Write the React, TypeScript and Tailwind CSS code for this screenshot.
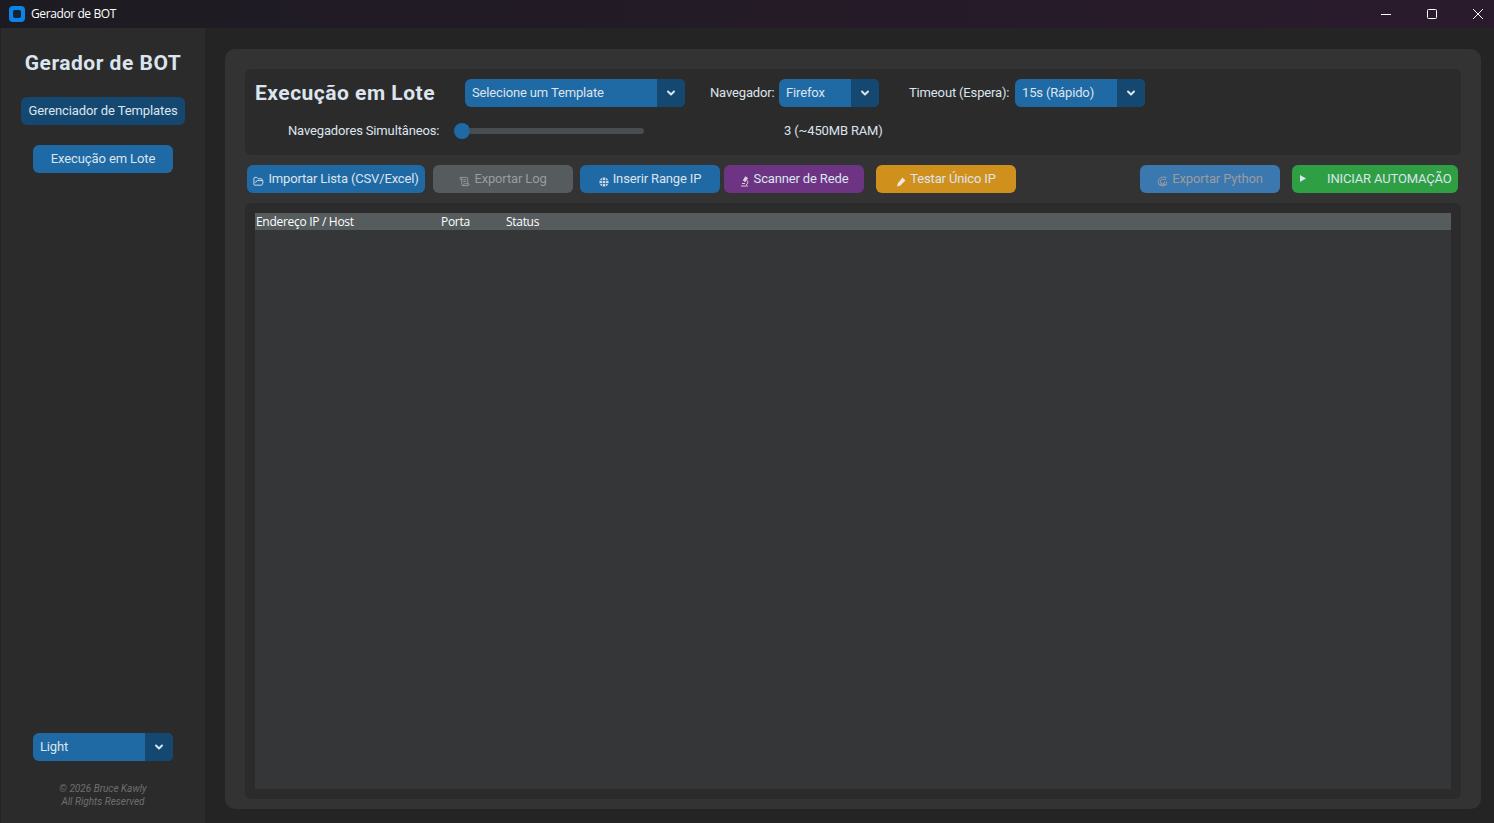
import React from "react";
import { ChevronDown, FolderOpen, ScrollText } from "lucide-react";

const Select: React.FC<{ label: string; width: string }> = ({ label, width }) => (
  <div className={`flex h-7 ${width} shrink-0 overflow-hidden rounded-md bg-[#1f6aa5] text-[13px] tracking-[-0.15px] text-[#dce4ee]`}>
    <span className="flex-1 pl-[7px] leading-[27px]">{label}</span>
    <span className="flex w-7 items-center justify-center bg-[#144870]">
      <ChevronDown size={12} strokeWidth={4} className="text-[#dce4ee]" />
    </span>
  </div>
);

const GlobeIcon = () => (
  <svg width="10" height="10" viewBox="0 0 10 10">
    <circle cx="5" cy="5" r="4.6" fill="#cfd8e2" />
    <path d="M0.5 3.5h9M0.5 6.5h9M3.4 0.6v8.8M6.6 0.6v8.8" stroke="#1f6aa5" strokeWidth="0.8" fill="none" />
  </svg>
);

const MicroscopeIcon = () => (
  <svg width="10" height="11" viewBox="0 0 10 11" fill="none" stroke="#d9cfe2" strokeWidth="1">
    <path d="M5.5 0.8l2 1.2-2.2 3.6-2-1.2z" fill="#d9cfe2" />
    <path d="M7 4.2a2.8 2.8 0 0 1-1 4.6" />
    <path d="M1 10h7M2 7.5h3" />
  </svg>
);

const PencilIcon = () => (
  <svg width="10" height="10" viewBox="0 0 10 10">
    <path d="M6.6 0.6l2.8 2.8-5 5-3.4 1 1-3.4z" fill="#f1e9da" />
  </svg>
);

const SnakeIcon = () => (
  <svg width="11" height="11" viewBox="0 0 11 11" fill="none" stroke="currentColor" strokeWidth="1">
    <path d="M9.8 5.5a4.3 4.3 0 1 1-4.3-4.3h4" />
    <path d="M7.8 5.6a2.3 2.3 0 1 1-2.3-2.3h3.6" />
    <path d="M1.6 8.8h8.2" />
  </svg>
);

const Btn: React.FC<{
  className: string;
  icon: React.ReactNode;
  label: string;
  disabled?: boolean;
}> = ({ className, icon, label, disabled }) => (
  <button
    className={`flex h-7 shrink-0 items-center justify-center gap-1 rounded-md text-[13px] tracking-[-0.15px] ${disabled ? "text-[#9a9c9e]" : "text-[#dce4ee]"} ${className}`}
  >
    <span className="mt-[5px]">{icon}</span>
    <span className="mb-[2px] leading-none">{label}</span>
  </button>
);

export default function App() {
  return (
    <div className="flex h-[823px] w-[1494px] flex-col overflow-hidden bg-[#242424] font-['Roboto',sans-serif]">
      {/* barra de titulo */}
      <div className="flex h-7 shrink-0 items-center bg-gradient-to-r from-[#1d1b22] to-[#2a1b2c] pl-[9px]">
        <div className="flex h-4 w-4 items-center justify-center rounded-[4px] bg-[#0a84ea]">
          <div className="h-2 w-2 rounded-[2px] bg-[#16222e]" />
        </div>
        <span className="ml-[6px] font-['Open_Sans',sans-serif] text-xs tracking-[-0.4px] text-white">Gerador de BOT</span>
        <div className="mb-px ml-auto flex items-center text-white">
          <svg width="12" height="12" viewBox="0 0 12 12" className="mr-[34px]">
            <path d="M1 6.5h10" stroke="currentColor" fill="none" />
          </svg>
          <svg width="12" height="12" viewBox="0 0 12 12" className="mr-[34px]">
            <rect x="1.5" y="1.5" width="9" height="9" rx="1" stroke="currentColor" fill="none" />
          </svg>
          <svg width="12" height="12" viewBox="0 0 12 12" className="mr-[10px]">
            <path d="M1 1l10 10M11 1L1 11" stroke="currentColor" fill="none" />
          </svg>
        </div>
      </div>

      <div className="flex min-h-0 flex-1">
        {/* menu lateral */}
        <aside className="ml-px flex w-[204px] shrink-0 flex-col items-center bg-[#2b2b2b]">
          <h1 className="mt-[21px] text-[21px] leading-7 font-bold tracking-[0.5px] text-[#dce4ee]">Gerador de BOT</h1>
          <button className="mt-[20px] h-7 w-[164px] rounded-md bg-[#144870] text-[13px] tracking-[-0.1px] text-[#dce4ee]">
            Gerenciador de Templates
          </button>
          <button className="mt-5 h-7 w-[140px] rounded-md bg-[#1f6aa5] text-[13px] tracking-[-0.1px] text-[#dce4ee]">
            Execução em Lote
          </button>
          <div className="mt-auto">
            <Select label="Light" width="w-[140px]" />
          </div>
          <p className="mt-[21px] mb-[15px] text-center text-[10px] leading-[13px] text-[#6f6f6f] italic">
            © 2026 Bruce Kawly
            <br />
            All Rights Reserved
          </p>
        </aside>

        {/* conteudo */}
        <main className="flex min-w-0 flex-1 flex-col pt-[21px] pr-[13px] pb-[14px] pl-5">
          <div className="flex flex-1 flex-col rounded-[10px] bg-[#333333] px-5 pt-5 pb-[10px]">
            <section className="flex h-[86px] shrink-0 flex-col rounded-md bg-[#2b2b2b]">
              <div className="mt-[10px] flex h-7 items-center pl-[10px] text-[13px] tracking-[-0.15px] text-[#dce4ee]">
                <h2 className="w-[210px] shrink-0 text-[21px] leading-7 font-bold tracking-[0.5px]">Execução em Lote</h2>
                <Select label="Selecione um Template" width="w-[220px]" />
                <span className="ml-[25px] w-[69px] shrink-0">Navegador:</span>
                <Select label="Firefox" width="w-[100px]" />
                <span className="ml-[30px] w-[106px] shrink-0">Timeout (Espera):</span>
                <Select label="15s (Rápido)" width="w-[130px]" />
              </div>
              <div className="mt-4 flex h-4 items-center pl-[43px] text-[13px] tracking-[-0.15px] text-[#dce4ee]">
                <span className="w-[166px] shrink-0">Navegadores Simultâneos:</span>
                <div className="flex h-4 w-[190px] shrink-0 items-center">
                  <div className="h-4 w-4 shrink-0 rounded-full bg-[#1f6aa5]" />
                  <div className="h-[6px] flex-1 rounded-r-full bg-[#4a4d50]" />
                </div>
                <span className="ml-[140px]">3 (~450MB RAM)</span>
              </div>
            </section>

            <div className="mt-[10px] flex shrink-0 pl-[2px]">
              <Btn className="w-[178px] bg-[#1f6aa5]" icon={<FolderOpen size={11} />} label="Importar Lista (CSV/Excel)" />
              <Btn className="ml-2 w-[140px] bg-[#565b5e]" icon={<ScrollText size={11} />} label="Exportar Log" disabled />
              <Btn className="ml-[7px] w-[140px] bg-[#1f6aa5]" icon={<GlobeIcon />} label="Inserir Range IP" />
              <Btn className="ml-1 w-[140px] bg-[#6c3483]" icon={<MicroscopeIcon />} label="Scanner de Rede" />
              <Btn className="ml-3 w-[140px] bg-[#d0901c]" icon={<PencilIcon />} label="Testar Único IP" />
              <Btn className="ml-[124px] w-[140px] bg-[#3b78b0]" icon={<SnakeIcon />} label="Exportar Python" disabled />
              <button className="ml-3 flex h-7 w-[166px] shrink-0 items-center rounded-md bg-[#2ea043] pl-[8px] text-[13px] tracking-[-0.15px] text-[#dce4ee]">
                <svg width="6" height="7" viewBox="0 0 6 7" className="mb-[2px]">
                  <path d="M0 0l6 3.5L0 7z" fill="currentColor" />
                </svg>
                <span className="mb-px ml-[21px]">INICIAR AUTOMAÇÃO</span>
              </button>
            </div>

            <section className="mt-[10px] flex min-h-0 flex-1 flex-col rounded-md bg-[#2b2b2b] px-[10px] pt-[10px] pb-[10px]">
              <div className="flex flex-1 flex-col bg-[#343638]">
                <div className="flex h-[17px] items-center bg-[#565b5e] pl-px font-['Open_Sans',sans-serif] text-xs tracking-[-0.3px] text-white">
                  <span className="w-[185px]">Endereço IP / Host</span>
                  <span className="w-[65px]">Porta</span>
                  <span>Status</span>
                </div>
              </div>
            </section>
          </div>
        </main>
      </div>
    </div>
  );
}
